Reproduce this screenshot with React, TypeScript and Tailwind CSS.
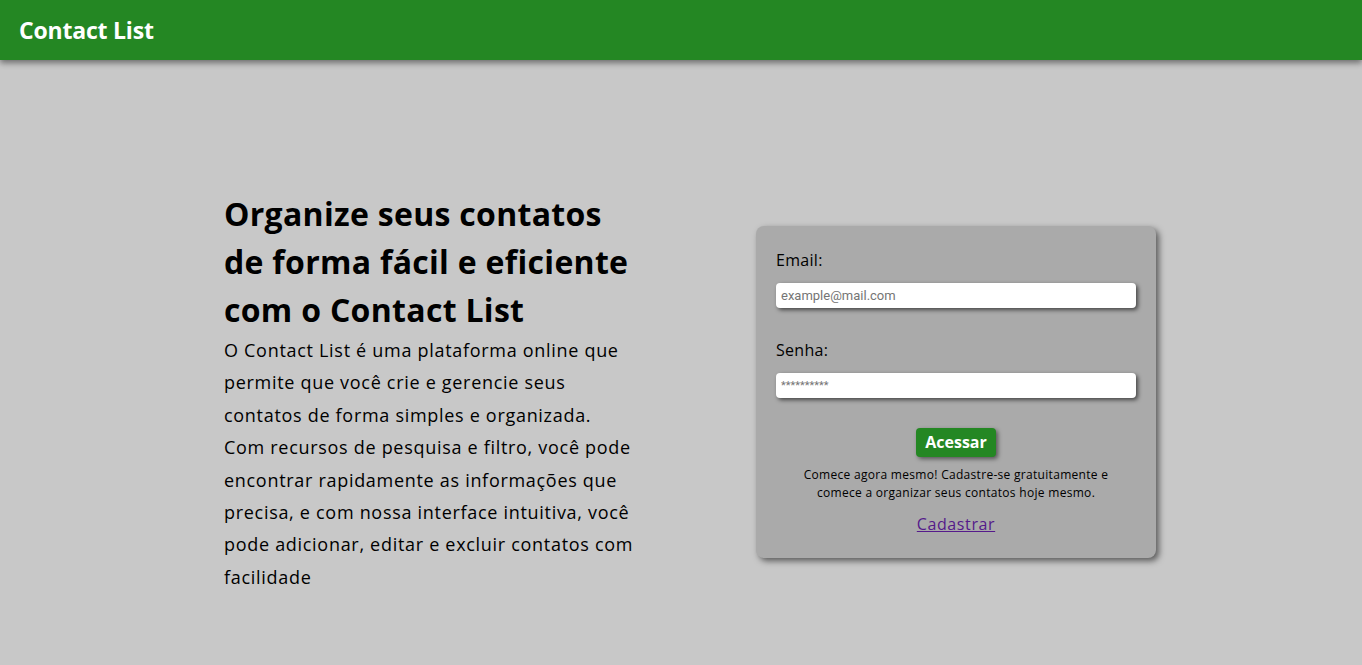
import { useState } from 'react'

const font = { fontFamily: '"Open Sans", "Noto Sans", sans-serif' }

function Header() {
  return (
    <header className="h-[60px] bg-[#248723] flex items-center px-[19px] shadow-[0_3px_6px_rgba(0,0,0,0.45)] relative z-10">
      <h1 className="text-[23px] font-bold text-white tracking-[-0.2px]">Contact List</h1>
    </header>
  )
}

function Intro() {
  return (
    <div className="w-[416px] text-black">
      <h2 className="text-[32px] font-bold leading-[48px] tracking-[0.3px]">
        Organize seus contatos
        <br />
        de forma fácil e eficiente
        <br />
        com o Contact List
      </h2>
      <p className="text-[18px] leading-[32.4px] tracking-[0.7px]">
        O Contact List é uma plataforma online que
        <br />
        permite que você crie e gerencie seus
        <br />
        contatos de forma simples e organizada.
        <br />
        Com recursos de pesquisa e filtro, você pode
        <br />
        encontrar rapidamente as informações que
        <br />
        precisa, e com nossa interface intuitiva, você
        <br />
        pode adicionar, editar e excluir contatos com
        <br />
        facilidade
      </p>
    </div>
  )
}

function LoginCard() {
  const [email, setEmail] = useState('')
  const [senha, setSenha] = useState('')

  return (
    <form
      className="w-[400px] bg-[#aaaaaa] rounded-lg px-5 pt-[22px] pb-[22px] shadow-[3px_3px_6px_rgba(0,0,0,0.55)] flex flex-col"
      onSubmit={e => e.preventDefault()}
    >
      <label className="text-[16px] text-black leading-6 tracking-[0.3px]">Email:</label>
      <input
        type="email"
        value={email}
        onChange={e => setEmail(e.target.value)}
        placeholder="example@mail.com"
        className="mt-[11px] h-[25px] w-full bg-white rounded px-[5px] text-[13px] placeholder:text-[#757575] outline-none shadow-[2px_2px_4px_rgba(0,0,0,0.6)]"
        style={{ fontFamily: 'Roboto, sans-serif' }}
      />
      <label className="mt-[30px] text-[16px] text-black leading-6 tracking-[0.3px]">Senha:</label>
      <input
        type="password"
        value={senha}
        onChange={e => setSenha(e.target.value)}
        placeholder="**********"
        className="mt-[11px] h-[25px] w-full bg-white rounded px-[5px] text-[11px] placeholder:text-[#757575] outline-none shadow-[2px_2px_4px_rgba(0,0,0,0.6)]"
        style={{ fontFamily: 'Roboto, sans-serif' }}
      />
      <button
        type="submit"
        className="self-center mt-[30px] w-[80px] h-[29px] bg-[#248723] text-white font-bold text-[16px] rounded shadow-[2px_2px_4px_rgba(0,0,0,0.5)]"
      >
        Acessar
      </button>
      <p className="mt-[9px] self-center w-[340px] text-[12px] leading-[18px] text-center text-black tracking-[0.3px]">
        Comece agora mesmo! Cadastre-se gratuitamente e comece a organizar seus contatos hoje mesmo.
      </p>
      <a href="#" className="mt-[10px] self-center text-[16px] text-[#551a8b] underline leading-6 tracking-[0.6px]">
        Cadastrar
      </a>
    </form>
  )
}

export default function App() {
  return (
    <div className="min-h-screen bg-[#c8c8c8]" style={font}>
      <Header />
      <main className="flex items-center pl-[224px] gap-[116px] pt-[130px] pb-[72px]">
        <Intro />
        <LoginCard />
      </main>
    </div>
  )
}
